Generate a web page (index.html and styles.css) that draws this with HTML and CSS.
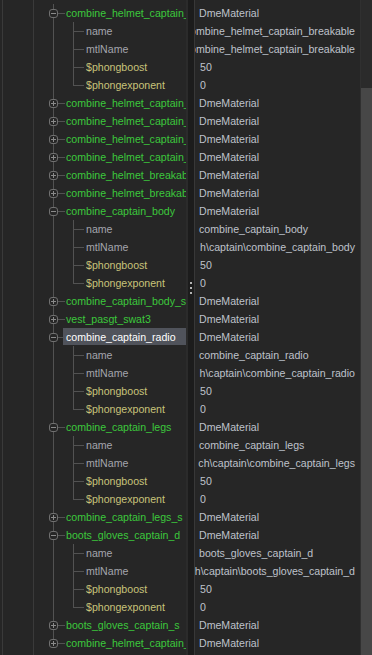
FILE: index.html
```html
<!doctype html>
<html>
    <head>
        <meta charset="utf-8" />
        <title>Material tree</title>
        <link rel="stylesheet" href="styles.css">
    </head>
    <body>
        <div id="panel">
            <div class="gutter"></div>

            <div class="names">
                <div class="row node open"><span class="toggle"></span><span class="label">combine_helmet_captain_b</span></div>
                <div class="row leaf"><span class="label">name</span></div>
                <div class="row leaf"><span class="label">mtlName</span></div>
                <div class="row leaf var"><span class="label">$phongboost</span></div>
                <div class="row leaf var last"><span class="label">$phongexponent</span></div>
                <div class="row node"><span class="toggle"></span><span class="label">combine_helmet_captain_v</span></div>
                <div class="row node"><span class="toggle"></span><span class="label">combine_helmet_captain_g</span></div>
                <div class="row node"><span class="toggle"></span><span class="label">combine_helmet_captain_i</span></div>
                <div class="row node"><span class="toggle"></span><span class="label">combine_helmet_captain_l</span></div>
                <div class="row node"><span class="toggle"></span><span class="label">combine_helmet_breakab</span></div>
                <div class="row node"><span class="toggle"></span><span class="label">combine_helmet_breakab</span></div>
                <div class="row node open"><span class="toggle"></span><span class="label">combine_captain_body</span></div>
                <div class="row leaf"><span class="label">name</span></div>
                <div class="row leaf"><span class="label">mtlName</span></div>
                <div class="row leaf var"><span class="label">$phongboost</span></div>
                <div class="row leaf var last"><span class="label">$phongexponent</span></div>
                <div class="row node"><span class="toggle"></span><span class="label">combine_captain_body_s</span></div>
                <div class="row node"><span class="toggle"></span><span class="label">vest_pasgt_swat3</span></div>
                <div class="row node open selected"><span class="toggle"></span><span class="label">combine_captain_radio</span></div>
                <div class="row leaf"><span class="label">name</span></div>
                <div class="row leaf"><span class="label">mtlName</span></div>
                <div class="row leaf var"><span class="label">$phongboost</span></div>
                <div class="row leaf var last"><span class="label">$phongexponent</span></div>
                <div class="row node open"><span class="toggle"></span><span class="label">combine_captain_legs</span></div>
                <div class="row leaf"><span class="label">name</span></div>
                <div class="row leaf"><span class="label">mtlName</span></div>
                <div class="row leaf var"><span class="label">$phongboost</span></div>
                <div class="row leaf var last"><span class="label">$phongexponent</span></div>
                <div class="row node"><span class="toggle"></span><span class="label">combine_captain_legs_s</span></div>
                <div class="row node open"><span class="toggle"></span><span class="label">boots_gloves_captain_d</span></div>
                <div class="row leaf"><span class="label">name</span></div>
                <div class="row leaf"><span class="label">mtlName</span></div>
                <div class="row leaf var"><span class="label">$phongboost</span></div>
                <div class="row leaf var last"><span class="label">$phongexponent</span></div>
                <div class="row node"><span class="toggle"></span><span class="label">boots_gloves_captain_s</span></div>
                <div class="row node last"><span class="toggle"></span><span class="label">combine_helmet_captain_s</span></div>
            </div>

            <div class="splitter">
                <span class="dot"></span>
                <span class="dot"></span>
                <span class="dot"></span>
            </div>

            <div class="values">
                <div class="row">DmeMaterial</div>
                <div class="row long"><span>combine_helmet_captain_breakable</span></div>
                <div class="row long"><span>combine_helmet_captain_breakable</span></div>
                <div class="row num">50</div>
                <div class="row num">0</div>
                <div class="row">DmeMaterial</div>
                <div class="row">DmeMaterial</div>
                <div class="row">DmeMaterial</div>
                <div class="row">DmeMaterial</div>
                <div class="row">DmeMaterial</div>
                <div class="row">DmeMaterial</div>
                <div class="row">DmeMaterial</div>
                <div class="row">combine_captain_body</div>
                <div class="row long"><span>h\captain\combine_captain_body</span></div>
                <div class="row num">50</div>
                <div class="row num">0</div>
                <div class="row">DmeMaterial</div>
                <div class="row">DmeMaterial</div>
                <div class="row">DmeMaterial</div>
                <div class="row">combine_captain_radio</div>
                <div class="row long"><span>h\captain\combine_captain_radio</span></div>
                <div class="row num">50</div>
                <div class="row num">0</div>
                <div class="row">DmeMaterial</div>
                <div class="row">combine_captain_legs</div>
                <div class="row long"><span>ch\captain\combine_captain_legs</span></div>
                <div class="row num">50</div>
                <div class="row num">0</div>
                <div class="row">DmeMaterial</div>
                <div class="row">DmeMaterial</div>
                <div class="row">boots_gloves_captain_d</div>
                <div class="row long"><span>h\captain\boots_gloves_captain_d</span></div>
                <div class="row num">50</div>
                <div class="row num">0</div>
                <div class="row">DmeMaterial</div>
                <div class="row">DmeMaterial</div>
            </div>

            <div class="scrollbar">
                <div class="thumb"></div>
            </div>
        </div>
    </body>
</html>
```

FILE: styles.css
```css
* {
    margin: 0;
    padding: 0;
    box-sizing: border-box;
}

html, body {
    width: 100%;
    height: 100%;
    overflow: hidden;
    background: #262626;
}

body {
    font-family: "Liberation Sans", Arial, sans-serif;
    font-size: 10.6px;
}

#panel {
    display: flex;
    height: 100%;
}

.gutter {
    width: 32px;
    margin-left: 2px;
    border-left: 1px solid #3a3a3a;
    border-right: 1px solid #3a3a3a;
}

.names {
    width: 152px;
    padding-top: 4px;
}

.row {
    height: 18px;
    line-height: 18px;
    white-space: nowrap;
    overflow: hidden;
}

/* tree column */

.names .row {
    display: flex;
    align-items: flex-start;
}

.node {
    color: #3cc83c;
    background:
        linear-gradient(#525252, #525252) 19px 0 / 1px 100% no-repeat,
        linear-gradient(#525252, #525252) 24px 9px / 7px 1px no-repeat;
}

.node.last {
    background:
        linear-gradient(#525252, #525252) 19px 0 / 1px 9px no-repeat,
        linear-gradient(#525252, #525252) 24px 9px / 7px 1px no-repeat;
}

.toggle {
    flex: none;
    width: 9px;
    height: 9px;
    margin: 5px 0 0 15px;
    border: 1px solid #707070;
    border-radius: 3px;
    background:
        linear-gradient(#8a8a8a, #8a8a8a) center / 5px 1px no-repeat,
        linear-gradient(#8a8a8a, #8a8a8a) center / 1px 5px no-repeat,
        #262626;
}

.node.open .toggle {
    background:
        linear-gradient(#8a8a8a, #8a8a8a) center / 5px 1px no-repeat,
        #262626;
}

.node .label {
    margin-left: 8px;
}

.node.selected .label {
    flex: 1;
    height: 17px;
    margin-left: 5px;
    padding-left: 3px;
    background: #50535b;
    color: #ffffff;
}

.leaf {
    color: #a4a5ad;
    background:
        linear-gradient(#525252, #525252) 19px 0 / 1px 100% no-repeat,
        linear-gradient(#525252, #525252) 39px 0 / 1px 100% no-repeat,
        linear-gradient(#525252, #525252) 39px 9px / 11px 1px no-repeat;
}

.leaf.last {
    background:
        linear-gradient(#525252, #525252) 19px 0 / 1px 100% no-repeat,
        linear-gradient(#525252, #525252) 39px 0 / 1px 10px no-repeat,
        linear-gradient(#525252, #525252) 39px 9px / 11px 1px no-repeat;
}

.leaf.var {
    color: #c8c37a;
}

.leaf .label {
    margin-left: 52px;
}

/* splitter between the columns */

.splitter {
    width: 9px;
    display: flex;
    flex-direction: column;
    align-items: center;
    gap: 3px;
    padding-top: 282px;
    border-left: 2px solid #2b2b2b;
    border-right: 1px solid #383838;
    background: #1c1c1c;
}

.dot {
    width: 2px;
    height: 2px;
    background: #b4b4b4;
}

/* value column */

.values {
    width: 165px;
    padding-top: 4px;
    color: #bfc2cb;
}

.values .row {
    display: flex;
    padding: 0 5px 0 4px;
}

.values .row.long {
    justify-content: flex-end;
}

.values .row.num {
    padding-left: 5px;
}

.scrollbar {
    width: 12px;
    padding-top: 88px;
    border-left: 1px solid #303030;
    background: #2b2b2b;
}

.thumb {
    height: 100%;
    background: #474747;
}
```
